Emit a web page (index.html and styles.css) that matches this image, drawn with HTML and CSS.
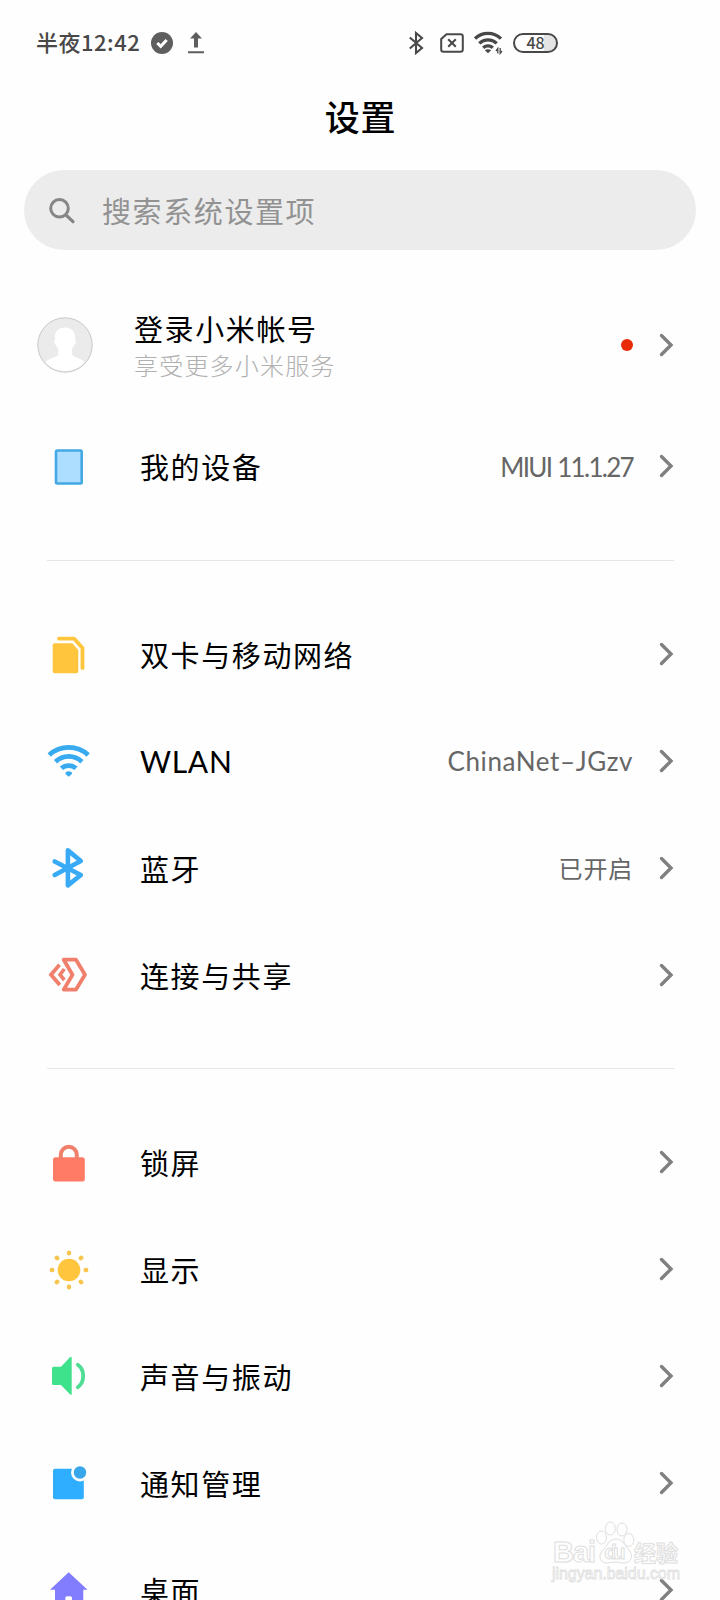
FILE: index.html
```html
<!DOCTYPE html>
<html lang="zh-CN">
<head>
    <meta charset="UTF-8">
    <title>设置</title>
    <link rel="stylesheet" href="styles.css">
</head>
<body>
    <svg class="defs" width="0" height="0">
        <symbol id="arrow" viewBox="0 0 15 24">
            <path d="M2.5 2.5 L12 12 L2.5 21.5" fill="none" stroke="#808080" stroke-width="3.4" stroke-linecap="round" stroke-linejoin="miter"/>
        </symbol>
    </svg>
    <div class="screen">
        <header class="statusbar">
            <span class="time">半夜12:42</span>
            <svg class="st-check" width="22" height="22" viewBox="0 0 22 22"><circle cx="11" cy="11" r="11" fill="#5e5e5e"/><path d="M6.3 11 L9.7 14.3 L15.7 8" fill="none" stroke="#fff" stroke-width="3"/></svg>
            <svg class="st-up" width="16" height="22" viewBox="0 0 16 22"><path d="M8 0 L14 6.5 H10 V15.5 H6 V6.5 H2 Z M0 19.3 H16 V21.3 H0 Z" fill="#5e5e5e"/></svg>
            <svg class="st-bt" width="16" height="24" viewBox="0 0 16 24"><path d="M1.8 6.5 L14 17 L8 22 V2 L14 7 L1.8 17.5" fill="none" stroke="#484848" stroke-width="2.1"/></svg>
            <svg class="st-sim" width="24" height="20" viewBox="0 0 24 20"><path d="M6.5 1.2 H20.5 Q22.8 1.2 22.8 3.5 V16.5 Q22.8 18.8 20.5 18.8 H3.5 Q1.2 18.8 1.2 16.5 V6 Z M8.2 6.2 L15.8 13.8 M15.8 6.2 L8.2 13.8" fill="none" stroke="#484848" stroke-width="2"/></svg>
            <svg class="st-wifi" width="29" height="24" viewBox="0 0 29 24">
                <g fill="none" stroke="#484848" stroke-width="3.3"><path d="M1 7.6 A19 19 0 0 1 27 7.6"/><path d="M5.3 12.4 A12.5 12.5 0 0 1 22.7 12.4"/><path d="M9.2 16.7 A7 7 0 0 1 18.8 16.7"/></g>
                <path d="M10.8 19.2 Q14 17.2 17.2 19.2 L14 22.3 Z" fill="#484848"/>
                <path d="M23.8 22.5 V17.5 L22 20 M26.2 17 V22.3 L28 20" fill="none" stroke="#484848" stroke-width="1.3"/>
            </svg>
            <div class="battery">48</div>
        </header>

        <h1>设置</h1>

        <div class="search">
            <svg width="28" height="28" viewBox="0 0 28 28"><circle cx="11.5" cy="11.3" r="8.8" fill="none" stroke="#868686" stroke-width="3"/><path d="M18 18 L25 24.7" stroke="#868686" stroke-width="3.2" stroke-linecap="round"/></svg>
            <span>搜索系统设置项</span>
        </div>

        <div class="row account">
            <svg class="avatar" width="56" height="56" viewBox="0 0 56 56">
                <circle cx="28" cy="28" r="27.2" fill="#ebebeb"/>
                <path d="M28 10.5 C34 10.5 38 14 38 20 Q38 22 38.3 23 Q39.5 23.5 38.5 26 Q38 28 37 28 Q36 31 35 32 V37 Q35.5 39 38 40 C43 42 46 43 47.6 45.5 A27 27 0 0 1 8.4 45.5 C10 43 13 42 18 40 Q21 39 21.3 37 V32 Q20 31 19 28 Q18 28 17.5 26 Q16.5 23.5 17.7 23 Q18 22 18 20 C18 14 22 10.5 28 10.5 Z" fill="#fff"/>
                <circle cx="28" cy="28" r="27.2" fill="none" stroke="#c8c8c8"/>
            </svg>
            <div class="account-text">
                <div class="name">登录小米帐号</div>
                <div class="desc">享受更多小米服务</div>
            </div>
            <span class="dot"></span>
            <svg class="arrow"><use href="#arrow"/></svg>
        </div>
        <div class="row">
            <svg class="icon" viewBox="0 0 48 48"><rect x="11" y="7.5" width="25.7" height="33" rx="1.2" fill="#aedeff" stroke="#43a8e3" stroke-width="2.6"/></svg>
            <span class="label">我的设备</span>
            <span class="value miui">MIUI 11.1.27</span>
            <svg class="arrow"><use href="#arrow"/></svg>
        </div>

        <hr>

        <div class="row">
            <svg class="icon" viewBox="0 0 48 48"><path d="M9.7 12.2 H27.3 L33.3 19 V40.2 Q33.3 42.2 31.3 42.2 H9.7 Q7.7 42.2 7.7 40.2 V14.2 Q7.7 12.2 9.7 12.2 Z" fill="#ffc53d"/><path d="M14 7.6 H29 L37.5 17 V37" fill="none" stroke="#ffc53d" stroke-width="3.8" stroke-linecap="round" stroke-linejoin="round"/></svg>
            <span class="label">双卡与移动网络</span>
            <svg class="arrow"><use href="#arrow"/></svg>
        </div>
        <div class="row">
            <svg class="icon" viewBox="0 0 48 48"><g fill="none" stroke="#38aaf0" stroke-width="4.8"><path d="M4.2 18 A29 29 0 0 1 43.2 18"/><path d="M10.5 24.8 A19 19 0 0 1 36.9 24.8"/><path d="M16.4 31.3 A11 11 0 0 1 31 31.3"/></g><path d="M20.5 35.5 Q23.7 33.2 26.9 35.5 V37 L23.7 39.7 L20.5 37 Z" fill="#38aaf0"/></svg>
            <span class="label wlan">WLAN</span>
            <span class="value net">ChinaNet–JGzv</span>
            <svg class="arrow"><use href="#arrow"/></svg>
        </div>
        <div class="row">
            <svg class="icon" viewBox="0 0 48 48"><path d="M9.7 17.5 L35.8 31 L22.9 41.4 V6.4 L35.8 17 L9.7 31" fill="none" stroke="#38aaf6" stroke-width="4.6" stroke-linecap="round" stroke-linejoin="round"/></svg>
            <span class="label">蓝牙</span>
            <span class="value">已开启</span>
            <svg class="arrow"><use href="#arrow"/></svg>
        </div>
        <div class="row">
            <svg class="icon" viewBox="0 0 48 48"><g fill="none" stroke="#f0806c" stroke-width="3.8"><path d="M18.7 8.7 H31 L40 23.7 L31 38.6 H18.7 L27.5 23.7 Z" stroke-linejoin="round"/><path d="M14.5 13.7 L6 23.7 L14.8 34"/><path d="M19.3 18 L15 23.7 L19.3 29" stroke-width="3.6"/></g></svg>
            <span class="label">连接与共享</span>
            <svg class="arrow"><use href="#arrow"/></svg>
        </div>

        <hr>

        <div class="row">
            <svg class="icon" viewBox="0 0 48 48"><rect x="8" y="18.2" width="31.8" height="24.4" rx="2.5" fill="#ff7b66"/><path d="M15.8 20 V15.8 A8 8 0 0 1 31.8 15.8 V20" fill="none" stroke="#f0806c" stroke-width="4"/></svg>
            <span class="label">锁屏</span>
            <svg class="arrow"><use href="#arrow"/></svg>
        </div>
        <div class="row">
            <svg class="icon" viewBox="0 0 48 48"><circle cx="24" cy="24" r="11.3" fill="#ffc53d"/><g stroke="#f7c44e" stroke-width="4.4" stroke-linecap="round"><path d="M24 6.7 V7.2 M24 40.8 V41.3 M6.8 24 H7.3 M40.7 24 H41.2 M11.8 11.8 L12.2 12.2 M35.8 35.8 L36.2 36.2 M36.2 11.8 L35.8 12.2 M12.2 35.8 L11.8 36.2"/></g></svg>
            <span class="label">显示</span>
            <svg class="arrow"><use href="#arrow"/></svg>
        </div>
        <div class="row">
            <svg class="icon" viewBox="0 0 48 48"><path d="M8.5 14.8 H16 L25 5.3 Q26.7 4 26.7 6 V41.7 Q26.7 43.7 25 42.3 L16 33 H8.5 Q7 33 7 31.5 V16.3 Q7 14.8 8.5 14.8 Z" fill="#3fe28c"/><path d="M32.8 12.8 C40 18 40 30 32.8 35.2" fill="none" stroke="#50dc94" stroke-width="3.8" stroke-linecap="round"/></svg>
            <span class="label">声音与振动</span>
            <svg class="arrow"><use href="#arrow"/></svg>
        </div>
        <div class="row">
            <svg class="icon" viewBox="0 0 48 48"><rect x="8" y="9.8" width="30.8" height="30.4" rx="2" fill="#2faeff"/><circle cx="35" cy="13.5" r="9" fill="#fefefe"/><circle cx="35" cy="13.5" r="6.2" fill="#38a6ea"/></svg>
            <span class="label">通知管理</span>
            <svg class="arrow"><use href="#arrow"/></svg>
        </div>
        <div class="row">
            <svg class="icon" viewBox="0 0 48 48"><path d="M23.7 6.3 L42.5 23.8 H38.3 V44 H27 V32 Q27 30.3 25.3 30.3 H22 Q20.3 30.3 20.3 32 V44 H10 V23.8 H5 Z" fill="#827cff"/></svg>
            <span class="label">桌面</span>
            <svg class="arrow"><use href="#arrow"/></svg>
        </div>

        <svg class="watermark" width="136" height="66" viewBox="0 0 136 66">
            <g fill="#fff" stroke="#dcdcdc">
                <text class="wm-bai" x="3" y="42" textLength="43">Bai</text>
                <ellipse cx="51.5" cy="17.5" rx="5" ry="6.5"/>
                <ellipse cx="60.3" cy="8.5" rx="5" ry="6.5"/>
                <ellipse cx="72" cy="9.5" rx="5" ry="6.5"/>
                <ellipse cx="78.8" cy="20" rx="5" ry="6.5"/>
                <path d="M66 19 C73 19 75 26 79 30 C84 36 81 43 74 43 C70 43 69 42 65.5 42 C62 42 60 43 56 43 C49 42 48 35 53 30 C57 26 59 19 66 19 Z"/>
                <text class="wm-du" x="54.5" y="39" textLength="21">du</text>
                <text class="wm-cn" x="84" y="41" textLength="44">经验</text>
                <text class="wm-url" x="2" y="59" textLength="128">jingyan.baidu.com</text>
            </g>
        </svg>
    </div>
</body>
</html>
```

FILE: styles.css
```css
body {
    margin: 0;
    background-color: #fefefe;
    font-family: Lato, "Noto Sans CJK SC", sans-serif;
    color: #000;
}
.defs {
    display: block;
}
.screen {
    position: relative;
    width: 720px;
    height: 1600px;
    overflow: hidden;
}
.statusbar {
    display: flex;
    align-items: center;
    height: 85px;
    padding-left: 36px;
    color: #484848;
}
.time {
    width: 115px;
    padding-bottom: 3px;
    font-family: "Noto Sans CJK SC", sans-serif;
    font-size: 22px;
    font-weight: 500;
    letter-spacing: 0.5px;
    white-space: nowrap;
}
.st-up {
    margin-left: 15px;
}
.st-bt {
    margin-left: 204px;
}
.st-sim {
    margin-left: 16px;
}
.st-wifi {
    margin-left: 10px;
}
.battery {
    width: 45px;
    height: 20px;
    margin-left: 10px;
    box-sizing: border-box;
    border: 2px solid #484848;
    border-radius: 10px;
    background: linear-gradient(to right, #fefefe 70%, #e4e4e4 70%);
    font-family: "Noto Sans CJK SC", sans-serif;
    font-size: 16px;
    font-weight: 500;
    line-height: 15px;
    text-align: center;
}
h1 {
    margin: 0;
    height: 85px;
    font-size: 35px;
    font-weight: 500;
    line-height: 64px;
    letter-spacing: 0.8px;
    text-align: center;
    text-indent: 1px;
}
.search {
    display: flex;
    align-items: center;
    height: 80px;
    margin: 0 24px 27px;
    padding: 1px 0 0 24px;
    box-sizing: border-box;
    border-radius: 40px;
    background-color: #ececec;
    color: #929292;
    font-size: 29px;
    letter-spacing: 1.6px;
}
.search span {
    margin-left: 26px;
    padding-bottom: 1px;
}
.row {
    display: flex;
    align-items: center;
    height: 106.8px;
    padding: 0 46px 0 45px;
}
.account {
    height: 136px;
    padding-left: 37px;
}
.account-text {
    flex: 1;
    margin-left: 41px;
    padding-top: 4px;
}
.name {
    font-size: 29px;
    line-height: 38px;
    letter-spacing: 1.6px;
}
.desc {
    color: #b0b0b0;
    font-size: 24px;
    font-weight: 300;
    line-height: 34px;
    letter-spacing: 1.2px;
}
.dot {
    width: 12px;
    height: 12px;
    border-radius: 50%;
    background-color: #e92a06;
}
.icon {
    width: 48px;
    height: 48px;
    margin-top: 1px;
}
.label {
    flex: 1;
    margin-left: 47px;
    font-size: 29px;
    letter-spacing: 1.6px;
}
.value {
    color: #666;
    font-size: 24px;
    letter-spacing: 0.8px;
}
.wlan {
    font-size: 30px;
    letter-spacing: 0.7px;
}
.miui,
.net {
    padding-top: 1px;
    font-size: 26px;
    letter-spacing: 0.6px;
}
.miui {
    letter-spacing: -1.7px;
    word-spacing: 1px;
}
.arrow {
    width: 15px;
    height: 24px;
    margin-left: 26px;
}
hr {
    height: 1px;
    margin: 40px 46px 40px 47px;
    border: none;
    background-color: #e6e6e6;
}
.watermark {
    position: absolute;
    left: 550px;
    top: 1520px;
    opacity: 0.9;
}
.wm-bai {
    font: bold 29px "Liberation Sans", sans-serif;
}
.wm-du {
    font: bold 20px "Liberation Sans", sans-serif;
}
.wm-cn {
    font: bold 22px "Noto Sans CJK SC", sans-serif;
}
.wm-url {
    font: 16px "Liberation Sans", sans-serif;
    stroke-width: 0.8px;
}
```
